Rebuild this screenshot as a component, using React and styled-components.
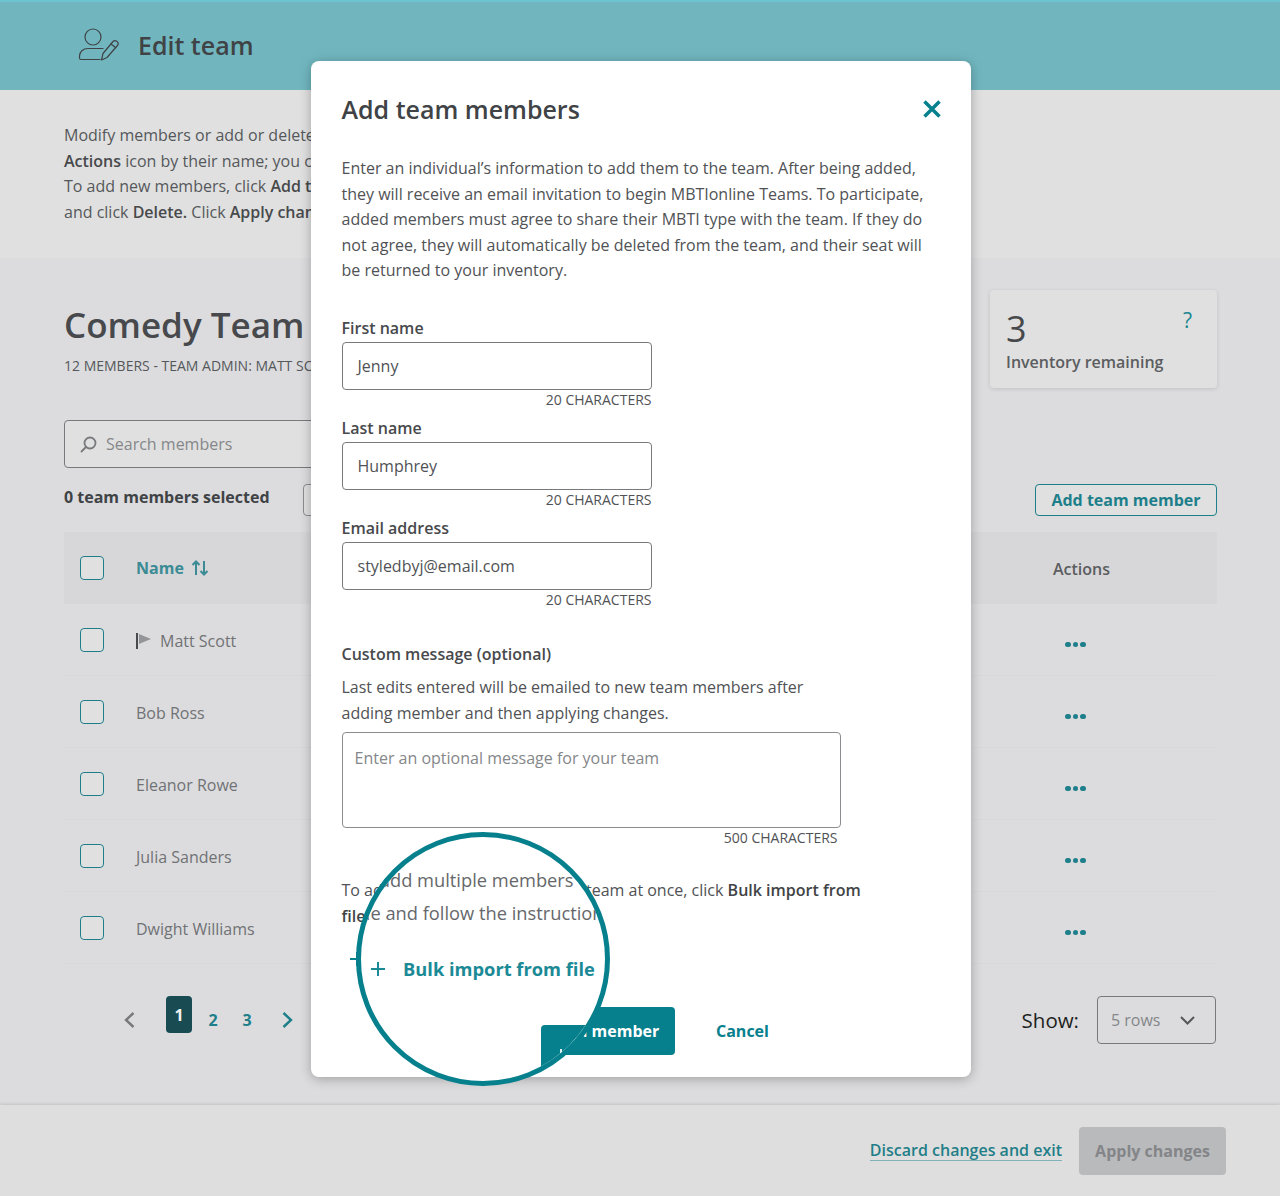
import styled, { createGlobalStyle } from 'styled-components';

const GlobalStyle = createGlobalStyle`
  html, body { margin: 0; padding: 0; }
  body {
    font-family: "Open Sans", "Liberation Sans", sans-serif;
    color: #444;
    background: #dcdcde;
  }
  * { box-sizing: border-box; }
`;

const Page = styled.div`
  position: relative;
  width: 1280px;
  height: 1196px;
  overflow: hidden;
  display: flex;
  flex-direction: column;
  background: #dcdcde;
`;

const Header = styled.header`
  height: 90px;
  flex: none;
  display: flex;
  align-items: center;
  gap: 18px;
  padding: 0 0 2px 78px;
  background: #71b6bf;
  border-top: 2px solid #6cc4d1;
`;

const HeaderTitle = styled.h1`
  margin: 0;
  font-size: 25px;
  font-weight: 600;
  color: #404346;
`;

const Intro = styled.section`
  height: 168px;
  flex: none;
  padding: 33px 0 0 64px;
  background: #e0e0e0;
  font-size: 16px;
  line-height: 25.5px;
  color: #55585b;
  white-space: nowrap;

  p { margin: 0; }
  b { font-weight: 600; color: #47494c; }
`;

const Main = styled.main`
  flex: 1;
  padding: 0 63px 0 64px;
  display: flex;
  flex-direction: column;
`;

const TeamRow = styled.div`
  height: 162px;
  flex: none;
  display: flex;
  justify-content: space-between;
  align-items: flex-start;
`;

const TeamInfo = styled.div`
  padding-top: 43px;
`;

const TeamName = styled.h2`
  margin: 0;
  font-size: 35px;
  line-height: 48px;
  font-weight: 600;
  color: #47494c;
`;

const TeamMeta = styled.div`
  margin-top: 7px;
  font-size: 14px;
  line-height: 20px;
  color: #55585b;
`;

const InventoryCard = styled.div`
  position: relative;
  width: 227px;
  height: 98px;
  margin-top: 32px;
  padding: 16px 16px 0;
  border-radius: 4px;
  background: #e0e0e0;
  box-shadow: 0 1px 4px rgba(0, 0, 0, 0.12);
`;

const InventoryCount = styled.div`
  font-size: 36px;
  line-height: 45px;
  color: #47494c;
`;

const InventoryLabel = styled.div`
  font-size: 16px;
  line-height: 22px;
  font-weight: 600;
  color: #5b5d60;
`;

const HelpMark = styled.span`
  position: absolute;
  top: 17px;
  right: 25px;
  font-size: 21px;
  font-weight: 500;
  line-height: 27px;
  color: #1d8590;
`;

const SearchBox = styled.div`
  width: 400px;
  height: 48px;
  flex: none;
  display: flex;
  align-items: center;
  gap: 9px;
  padding-left: 15px;
  border: 1px solid #77797c;
  border-radius: 4px;
  background: #e0e0e0;
  font-size: 16px;
  color: #85878a;
`;

const SelectedRow = styled.div`
  height: 32px;
  margin-top: 16px;
  flex: none;
  display: flex;
  justify-content: space-between;
  align-items: center;
`;

const SelectedGroup = styled.div`
  display: flex;
  align-items: center;
  gap: 33px;
`;

const SelectedLabel = styled.div`
  width: 206px;
  padding-bottom: 6px;
  font-size: 16px;
  line-height: 22px;
  font-weight: 700;
  color: #404346;
`;

const DeleteButton = styled.button`
  width: 80px;
  height: 32px;
  padding: 0;
  border: 1px solid #8a8c8f;
  border-radius: 4px;
  background: #e0e0e0;
  font: 700 16px "Open Sans", sans-serif;
  color: #8a8c8f;
`;

const OutlineButton = styled.button`
  width: 182px;
  height: 32px;
  padding: 0;
  border: 1px solid #1d7f8a;
  border-radius: 4px;
  background: #e0e0e0;
  font: 700 16px "Open Sans", sans-serif;
  color: #1d7f8a;
`;

const TableHead = styled.div`
  height: 72px;
  margin-top: 16px;
  flex: none;
  display: flex;
  align-items: center;
  background: #d7d7d9;
`;

const CheckCell = styled.div`
  width: 72px;
  height: 100%;
  flex: none;
  display: flex;
  align-items: center;
  padding-left: 16px;
`;

const CheckBox = styled.span`
  width: 24px;
  height: 24px;
  display: block;
  border: 1px solid #1d7f8a;
  border-radius: 4px;
  background: #e0e0e0;
`;

const NameHead = styled.div`
  flex: 1;
  display: flex;
  align-items: center;
  gap: 7px;
  font-size: 16px;
  font-weight: 700;
  color: #3b8b95;
`;

const ActionsHead = styled.div`
  width: 164px;
  flex: none;
  padding-top: 2px;
  font-size: 16px;
  font-weight: 600;
  color: #5b5d60;
`;

const MemberRow = styled.div`
  height: 72px;
  flex: none;
  display: flex;
  align-items: center;
  border-bottom: 1px solid #d8d8da;
  font-size: 16px;
  color: #707275;
`;

const MemberName = styled.div`
  flex: 1;
  display: flex;
  align-items: center;
  gap: 9px;
  padding-top: 2px;
`;

const Dots = styled.div`
  width: 164px;
  flex: none;
  display: flex;
  gap: 2px;
  padding: 10px 0 0 12px;

  span {
    width: 5.5px;
    height: 5.5px;
    border-radius: 50%;
    background: #1d7f8a;
  }
`;

const PagerRow = styled.div`
  flex: none;
  height: 80px;
  padding: 32px 1px 0 0;
  display: flex;
  justify-content: space-between;
  align-items: flex-start;
`;

const Pager = styled.div`
  display: flex;
  align-items: center;
  height: 37px;
  padding-left: 60px;
  font-size: 16px;
  font-weight: 700;
  color: #1d7f8a;

  svg { margin-top: 10px; }
  svg:first-child { margin-right: 31px; }
  svg:last-child { margin-left: 18px; }
`;

const PageLink = styled.span`
  width: ${({ $current }) => ($current ? '26px' : '34px')};
  height: 37px;
  display: flex;
  align-items: center;
  justify-content: center;
  border-radius: 4px;
  margin-right: ${({ $current }) => ($current ? '4px' : '0')};
  color: ${({ $current }) => ($current ? '#f0f0f0' : '#1d7f8a')};
  background: ${({ $current }) => ($current ? '#184c52' : 'transparent')};
  padding-top: ${({ $current }) => ($current ? '0' : '11px')};
`;

const ShowBlock = styled.div`
  display: flex;
  align-items: center;
  gap: 18px;
  font-size: 20.500px;
  font-weight: 500;
  color: #1e1f20;
`;

const RowSelect = styled.div`
  width: 119px;
  height: 48px;
  display: flex;
  align-items: center;
  justify-content: space-between;
  padding: 0 20px 0 13px;
  border: 1px solid #77797c;
  border-radius: 4px;
  font-size: 16px;
  font-weight: 400;
  color: #85878a;
`;

const Footer = styled.footer`
  height: 91px;
  flex: none;
  display: flex;
  align-items: center;
  justify-content: flex-end;
  gap: 17px;
  padding: 1px 54px 0 0;
  background: #dedede;
  box-shadow: 0 -1px 3px rgba(0, 0, 0, 0.12);
`;

const DiscardLink = styled.a`
  font-size: 16px;
  font-weight: 600;
  color: #1f7e88;
  text-decoration: none;
  border-bottom: 1px solid #7fb2b8;
  line-height: 20px;
  margin-top: -2px;
`;

const ApplyButton = styled.button`
  width: 147px;
  height: 48px;
  border: 0;
  border-radius: 4px;
  background: #b9babc;
  font: 700 16px "Open Sans", sans-serif;
  color: #838588;
`;

const Modal = styled.div`
  position: absolute;
  left: 311px;
  top: 61px;
  width: 660px;
  height: 1016px;
  padding: 31px 30px 0 30.5px;
  background: #fff;
  border-radius: 8px;
  box-shadow: 0 2px 12px rgba(0, 0, 0, 0.28);
  color: #4a4c4f;
`;

const ModalHead = styled.div`
  display: flex;
  justify-content: space-between;
  align-items: flex-start;
`;

const ModalTitle = styled.h2`
  margin: 0;
  font-size: 25px;
  line-height: 34px;
  font-weight: 600;
  color: #404346;
`;

const CloseButton = styled.span`
  display: block;
  margin: 8px 0 0 0;
  height: 18px;
`;

const ModalText = styled.p`
  margin: 30px 0 0;
  font-size: 16px;
  line-height: 25.5px;
  color: #505255;
`;

const Field = styled.div`
  width: 310px;
  height: 100px;
`;

const FieldLabel = styled.div`
  font-size: 16px;
  line-height: 22px;
  font-weight: 600;
  color: #47494c;
`;

const TextBox = styled.div`
  height: 48px;
  margin-top: 3px;
  padding-left: 15px;
  display: flex;
  align-items: center;
  border: 1px solid #77797c;
  border-radius: 4px;
  font-size: 16px;
  color: #505255;
`;

const CharCount = styled.div`
  font-size: 14px;
  line-height: 20px;
  text-align: right;
  padding-right: ${({ $inset }) => ($inset ? '3px' : '0')};
  color: #505255;
`;

const Fields = styled.div`
  margin-top: 33px;
`;

const Optional = styled.div`
  margin-top: 26px;
  width: 499px;
`;

const OptionalHelp = styled.p`
  margin: 9px 0 0;
  font-size: 16px;
  line-height: 26px;
  color: #505255;
`;

const MessageBox = styled.div`
  height: 96px;
  margin-top: 6px;
  padding: 12px 12px;
  border: 1px solid #8a8c8f;
  border-radius: 4px;
  font-size: 16px;
  line-height: 26px;
  color: #85878a;
`;

const BulkText = styled.p`
  margin: 29px 0 0;
  width: 530px;
  font-size: 16px;
  line-height: 26px;
  color: #505255;

  b { font-weight: 600; color: #404346; }
`;

const BulkLink = styled.div`
  margin-top: 16px;
  height: 28px;
  padding-left: 8px;
  display: flex;
  align-items: center;
  gap: 16px;
  font-size: 16px;
  font-weight: 700;
  color: #07808d;
`;

const ModalActions = styled.div`
  margin-top: 34px;
  display: flex;
  align-items: center;
  gap: 41px;
  padding-left: 199px;
`;

const PrimaryButton = styled.button`
  width: 134.5px;
  height: 48px;
  padding: 0;
  border: 0;
  border-radius: 4px;
  background: #07808d;
  font: 700 16px "Open Sans", sans-serif;
  color: #fff;
`;

const CancelLink = styled.span`
  font-size: 16px;
  font-weight: 700;
  color: #07808d;
`;

const Magnifier = styled.div`
  position: absolute;
  left: 356px;
  top: 832px;
  width: 254px;
  height: 254px;
  border: 5px solid #07808d;
  border-radius: 50%;
  background: #fff;
  overflow: hidden;
  z-index: 2;
`;

const ZoomLine = styled.div`
  position: absolute;
  left: ${({ $x }) => $x}px;
  top: ${({ $y }) => $y}px;
  font-size: 18.300px;
  line-height: 28px;
  white-space: nowrap;
  color: #66686b;
`;

const ZoomBulk = styled.div`
  position: absolute;
  left: 10px;
  top: 118px;
  display: flex;
  align-items: center;
  gap: 18px;
  font-size: 18.300px;
  line-height: 28px;
  font-weight: 700;
  white-space: nowrap;
  color: #1b8a96;
`;

const ZoomButton = styled.div`
  position: absolute;
  left: 180px;
  top: 188px;
  width: 120px;
  height: 60px;
  border-radius: 4px 0 0 0;
  background: #07808d;

  &::after {
    content: '';
    position: absolute;
    left: 19px;
    top: 24px;
    width: 2px;
    height: 4px;
    background: #e4f2f3;
  }
`;

const MEMBERS = ['Matt Scott', 'Bob Ross', 'Eleanor Rowe', 'Julia Sanders', 'Dwight Williams'];

function UserEditIcon() {
  return (
    <svg width="42" height="34" viewBox="0 0 42 34" fill="none" stroke="#404346" strokeWidth="1.2" strokeLinecap="round" strokeLinejoin="round">
      <circle cx="15" cy="9" r="8" />
      <path d="M25 20.500 H10 C5 20.500 1.500 24 1.500 28 V30 C1.500 31 2 31.500 3 31.500 H22" />
      <path d="M23.500 32 L25 25.500 L35 13.500 C36 12.500 37.500 12.500 39 13.500 C40.500 14.500 40.500 16 39.500 17.500 L29 29.500 Z" />
      <path d="M33 16 L37.500 19.500" />
    </svg>
  );
}

function SearchIcon() {
  return (
    <svg width="17" height="17" viewBox="0 0 17 17" fill="none" stroke="#77797c" strokeWidth="1.800" strokeLinecap="round">
      <circle cx="10" cy="7" r="5.500" />
      <path d="M6 11 L1.500 15.500" />
    </svg>
  );
}

function SortIcon() {
  return (
    <svg width="18" height="16" viewBox="0 0 18 16" fill="none" stroke="#3b8b95" strokeWidth="2">
      <path d="M5 15 V2 M1.500 5 L5 1.500 L8.500 5" />
      <path d="M13 1 V14 M9.500 11 L13 14.500 L16.500 11" />
    </svg>
  );
}

function FlagIcon() {
  return (
    <svg width="15" height="16" viewBox="0 0 15 16">
      <rect x="0" y="0" width="2" height="16" fill="#47494c" />
      <path d="M3 1 L15 6 L3 11 Z" fill="#939598" />
    </svg>
  );
}

function Chevron({ left, color }) {
  return (
    <svg width="11" height="16" viewBox="0 0 11 16" fill="none" stroke={color} strokeWidth="2.400">
      <path d={left ? 'M9.500 1 L2 8 L9.500 15' : 'M1.500 1 L9 8 L1.500 15'} />
    </svg>
  );
}

function CloseIcon() {
  return (
    <svg width="18" height="18" viewBox="0 0 18 18" stroke="#07808d" strokeWidth="3.500">
      <path d="M1.500 1.500 L16.500 16.500 M16.500 1.500 L1.500 16.500" />
    </svg>
  );
}

function PlusIcon({ color }) {
  return (
    <svg width="14" height="14" viewBox="0 0 14 14" stroke={color} strokeWidth="2">
      <path d="M7 0 V14 M0 7 H14" />
    </svg>
  );
}

function TextField({ label, value }) {
  return (
    <Field>
      <FieldLabel>{label}</FieldLabel>
      <TextBox>{value}</TextBox>
      <CharCount>20 CHARACTERS</CharCount>
    </Field>
  );
}

export default function App() {
  return (
    <Page>
      <GlobalStyle />
      <Header>
        <UserEditIcon />
        <HeaderTitle>Edit team</HeaderTitle>
      </Header>
      <Intro>
        <p>Modify members or add or delete them from the team. To edit a member, click the</p>
        <p><b>Actions</b> icon by their name; you can then edit their details or remove them.</p>
        <p>To add new members, click <b>Add team member</b>. To delete the team, select all</p>
        <p>and click <b>Delete.</b> Click <b>Apply changes</b> when you have finished.</p>
      </Intro>
      <Main>
        <TeamRow>
          <TeamInfo>
            <TeamName>Comedy Team</TeamName>
            <TeamMeta>12 MEMBERS - TEAM ADMIN: MATT SCOTT</TeamMeta>
          </TeamInfo>
          <InventoryCard>
            <InventoryCount>3</InventoryCount>
            <InventoryLabel>Inventory remaining</InventoryLabel>
            <HelpMark>?</HelpMark>
          </InventoryCard>
        </TeamRow>
        <SearchBox>
          <SearchIcon />
          Search members
        </SearchBox>
        <SelectedRow>
          <SelectedGroup>
            <SelectedLabel>0 team members selected</SelectedLabel>
            <DeleteButton>Delete</DeleteButton>
          </SelectedGroup>
          <OutlineButton>Add team member</OutlineButton>
        </SelectedRow>
        <TableHead>
          <CheckCell><CheckBox /></CheckCell>
          <NameHead>Name <SortIcon /></NameHead>
          <ActionsHead>Actions</ActionsHead>
        </TableHead>
        {MEMBERS.map((name, i) => (
          <MemberRow key={name}>
            <CheckCell><CheckBox /></CheckCell>
            <MemberName>
              {i === 0 && <FlagIcon />}
              {name}
            </MemberName>
            <Dots><span /><span /><span /></Dots>
          </MemberRow>
        ))}
        <PagerRow>
          <Pager>
            <Chevron left color="#77797c" />
            <PageLink $current>1</PageLink>
            <PageLink>2</PageLink>
            <PageLink>3</PageLink>
            <Chevron color="#1d7f8a" />
          </Pager>
          <ShowBlock>
            Show:
            <RowSelect>
              5 rows
              <svg width="15" height="9" viewBox="0 0 15 9" fill="none" stroke="#55585b" strokeWidth="2"><path d="M1 1 L7.500 7.500 L14 1" /></svg>
            </RowSelect>
          </ShowBlock>
        </PagerRow>
      </Main>
      <Footer>
        <DiscardLink>Discard changes and exit</DiscardLink>
        <ApplyButton>Apply changes</ApplyButton>
      </Footer>

      <Modal>
        <ModalHead>
          <ModalTitle>Add team members</ModalTitle>
          <CloseButton><CloseIcon /></CloseButton>
        </ModalHead>
        <ModalText>
          Enter an individual’s information to add them to the team. After being added, they will receive an email invitation to begin MBTIonline Teams. To participate, added members must agree to share their MBTI type with the team. If they do not agree, they will automatically be deleted from the team, and their seat will be returned to your inventory.
        </ModalText>
        <Fields>
          <TextField label="First name" value="Jenny" />
          <TextField label="Last name" value="Humphrey" />
          <TextField label="Email address" value="styledbyj@email.com" />
        </Fields>
        <Optional>
          <FieldLabel>Custom message (optional)</FieldLabel>
          <OptionalHelp>Last edits entered will be emailed to new team members after adding member and then applying changes.</OptionalHelp>
          <MessageBox>Enter an optional message for your team</MessageBox>
          <CharCount $inset>500 CHARACTERS</CharCount>
        </Optional>
        <BulkText>To add multiple members to the team at once, click <b>Bulk import from file</b> and follow the instructions.</BulkText>
        <BulkLink><PlusIcon color="#07808d" />Bulk import from file</BulkLink>
        <ModalActions>
          <PrimaryButton>Add member</PrimaryButton>
          <CancelLink>Cancel</CancelLink>
        </ModalActions>
      </Modal>

      <Magnifier>
        <ZoomLine $x={-7} $y={29}>To add multiple members</ZoomLine>
        <ZoomLine $x={-6} $y={62}>file and follow the instructions</ZoomLine>
        <ZoomBulk><PlusIcon color="#1b8a96" />Bulk import from file</ZoomBulk>
        <ZoomButton />
      </Magnifier>
    </Page>
  );
}
